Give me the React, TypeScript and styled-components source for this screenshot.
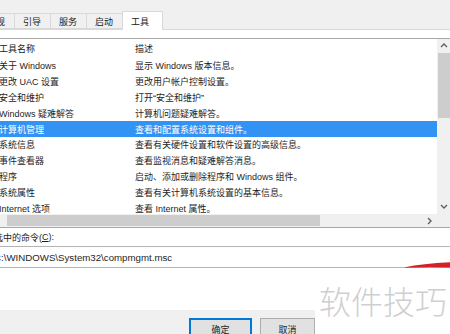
import React from "react";
import styled, { createGlobalStyle } from "styled-components";

const FONT = `"Liberation Sans", "Noto Sans CJK SC", sans-serif`;

const GlobalStyle = createGlobalStyle`
  html, body { margin: 0; padding: 0; background: #ffffff; }
  body { width: 450px; height: 334px; overflow: hidden; font-family: ${FONT}; }
  * { box-sizing: border-box; }
`;

const Frame = styled.div`
  position: relative;
  width: 450px;
  height: 334px;
  overflow: hidden;
  display: flex;
  flex-direction: column;
  background: #ffffff;
  font-family: ${FONT};
  font-size: 9px;
  color: #1e1e1e;
`;

const TabStrip = styled.div`
  height: 30px;
  flex: none;
  background: #f0f0f0;
  border-bottom: 1px solid #d9d9d9;
  display: flex;
  align-items: flex-end;
`;

const Tab = styled.div<{ $active?: boolean; $first?: boolean }>`
  flex: none;
  width: ${(p) => (p.$active ? 41 : 36)}px;
  height: ${(p) => (p.$active ? 19 : 16)}px;
  margin-bottom: ${(p) => (p.$active ? -1 : 0)}px;
  margin-left: ${(p) => (p.$first ? -22 : 0)}px;
  padding-left: 8px;
  display: flex;
  align-items: center;
  padding-top: ${(p) => (p.$active ? 0 : 1)}px;
  background: ${(p) => (p.$active ? "#ffffff" : "#f0f0f0")};
  border: 1px solid #d9d9d9;
  border-bottom: ${(p) => (p.$active ? "none" : "1px solid #d9d9d9")};
  border-right: ${(p) => (p.$active ? "1px solid #d9d9d9" : "none")};
  white-space: nowrap;
  font-size: 9px;
  color: #222;
`;

const Panel = styled.div`
  flex: 1;
  display: flex;
  flex-direction: column;
  padding-top: 8px;
  background: #ffffff;
`;

const ListBox = styled.div`
  flex: none;
  border-top: 1px solid #a8a8a8;
  border-bottom: 1px solid #a8a8a8;
  display: grid;
  grid-template-columns: 1fr 13px;
  grid-template-rows: 175px 13px;
`;

const ListArea = styled.div`
  overflow: hidden;
  display: flex;
  flex-direction: column;
`;

const HeaderRow = styled.div`
  flex: none;
  height: 19px;
  display: grid;
  grid-template-columns: 135px 1fr;
  align-items: center;
  white-space: nowrap;
  color: #222;
`;

const Row = styled.div<{ $selected?: boolean }>`
  flex: none;
  height: 15.8px;
  display: grid;
  grid-template-columns: 135px 1fr;
  align-items: center;
  white-space: nowrap;
  background: ${(p) => (p.$selected ? "#3393f5" : "transparent")};
  color: ${(p) => (p.$selected ? "#ffffff" : "#1e1e1e")};
`;

const NameCell = styled.span`
  margin-left: -1px;
  overflow: hidden;
`;

const DescCell = styled.span`
  overflow: hidden;
`;

const VScroll = styled.div`
  background: #f0f0f0;
  display: flex;
  flex-direction: column;
`;

const ArrowBox = styled.div<{ $w?: number }>`
  flex: none;
  width: ${(p) => (p.$w ? `${p.$w}px` : "100%")};
  height: 14px;
  display: flex;
  align-items: center;
  justify-content: center;
`;

const VThumb = styled.div`
  flex: none;
  height: 65px;
  margin-left: 1px;
  background: #cdcdcd;
`;

const Grow = styled.div`
  flex: 1;
`;

const HScroll = styled.div`
  background: #f0f0f0;
  display: flex;
  align-items: center;
`;

const HThumb = styled.div`
  flex: none;
  width: 313px;
  height: 11px;
  margin-left: 7px;
  background: #cdcdcd;
`;

const Corner = styled.div`
  background: #f0f0f0;
`;

const Label = styled.div`
  flex: none;
  height: 18px;
  display: flex;
  align-items: center;
  margin-left: -6px;
  white-space: nowrap;
  color: #1e1e1e;
`;

const Underline = styled.span`
  text-decoration: underline;
`;

const CommandField = styled.div`
  flex: none;
  height: 22px;
  border-top: 1px solid #b4b4b4;
  border-bottom: 1px solid #b4b4b4;
  display: flex;
  align-items: center;
  padding-left: 0;
  white-space: nowrap;
  font-size: 9.7px;
`;

const CommandText = styled.span`
  margin-left: -6px;
  color: #1e1e1e;
`;

const Spacer = styled.div`
  flex: 1;
`;

const BottomBar = styled.div`
  flex: none;
  height: 24px;
  background: #f0f0f0;
  display: flex;
  align-items: flex-start;
  gap: 8px;
  padding: 8px 0 0 189px;
`;

const Button = styled.div<{ $default?: boolean; $w: number }>`
  flex: none;
  width: ${(p) => p.$w}px;
  height: 23px;
  background: #e1e1e1;
  border: 1px solid ${(p) => (p.$default ? "#0078d7" : "#adadad")};
  box-shadow: ${(p) => (p.$default ? "inset 0 0 0 1px #0078d7" : "none")};
  display: flex;
  justify-content: center;
  padding-top: 4px;
  font-size: 9px;
  color: #1e1e1e;
`;

const Overlay = styled.div`
  position: absolute;
  left: 315px;
  top: 268px;
  right: 0;
  bottom: 0;
  background: #ffffff;
`;

const Watermark = styled.div`
  margin: 16px 0 0 4px;
  font-family: "Noto Sans CJK SC", sans-serif;
  font-weight: 300;
  font-size: 32px;
  line-height: 32px;
  color: #cfcfcf;
  white-space: nowrap;
`;

const RedMark = styled.svg`
  position: absolute;
  left: 404px;
  top: 259px;
`;

const Chevron = ({ dir }: { dir: "up" | "down" | "left" | "right" }) => {
  const pts: Record<string, string> = {
    up: "1,5 4,2 7,5",
    down: "1,2 4,5 7,2",
    left: "5,1 2,4 5,7",
    right: "2,1 5,4 2,7",
  };
  return (
    <svg width="8" height="8" viewBox="0 0 8 8">
      <polyline points={pts[dir]} fill="none" stroke="#606060" strokeWidth="1.4" />
    </svg>
  );
};

const tools: [string, string][] = [
  ["关于 Windows", "显示 Windows 版本信息。"],
  ["更改 UAC 设置", "更改用户帐户控制设置。"],
  ["安全和维护", "打开“安全和维护”"],
  ["Windows 疑难解答", "计算机问题疑难解答。"],
  ["计算机管理", "查看和配置系统设置和组件。"],
  ["系统信息", "查看有关硬件设置和软件设置的高级信息。"],
  ["事件查看器", "查看监视消息和疑难解答消息。"],
  ["程序", "启动、添加或删除程序和 Windows 组件。"],
  ["系统属性", "查看有关计算机系统设置的基本信息。"],
  ["Internet 选项", "查看 Internet 属性。"],
];

const tabs = ["常规", "引导", "服务", "启动"];

export default function App() {
  return (
    <Frame>
      <GlobalStyle />
      <TabStrip>
        {tabs.map((t, i) => (
          <Tab key={t} $first={i === 0}>
            {t}
          </Tab>
        ))}
        <Tab $active>工具</Tab>
      </TabStrip>
      <Panel>
        <ListBox>
          <ListArea>
            <HeaderRow>
              <NameCell>工具名称</NameCell>
              <DescCell>描述</DescCell>
            </HeaderRow>
            {tools.map(([name, desc], i) => (
              <Row key={name} $selected={i === 4}>
                <NameCell>{name}</NameCell>
                <DescCell>{desc}</DescCell>
              </Row>
            ))}
          </ListArea>
          <VScroll>
            <ArrowBox>
              <Chevron dir="up" />
            </ArrowBox>
            <VThumb />
            <Grow />
            <ArrowBox>
              <Chevron dir="down" />
            </ArrowBox>
          </VScroll>
          <HScroll>
            <HThumb />
            <Grow />
            <ArrowBox $w={14}>
              <Chevron dir="right" />
            </ArrowBox>
          </HScroll>
          <Corner />
        </ListBox>
        <Label>
          选中的命令(<Underline>C</Underline>):
        </Label>
        <CommandField>
          <CommandText>C:\WINDOWS\System32\compmgmt.msc</CommandText>
        </CommandField>
        <Spacer />
        <BottomBar>
          <Button $default $w={63}>确定</Button>
          <Button $w={55}>取消</Button>
        </BottomBar>
      </Panel>
      <RedMark width="46" height="12" viewBox="0 0 46 12">
        <path d="M1 8.2 Q 18 4.5 46 3.2 L46 8.6 Q 24 7.6 1 8.8 Z" fill="#d42027" />
      </RedMark>
      <Overlay>
        <Watermark>软件技巧</Watermark>
      </Overlay>
    </Frame>
  );
}
